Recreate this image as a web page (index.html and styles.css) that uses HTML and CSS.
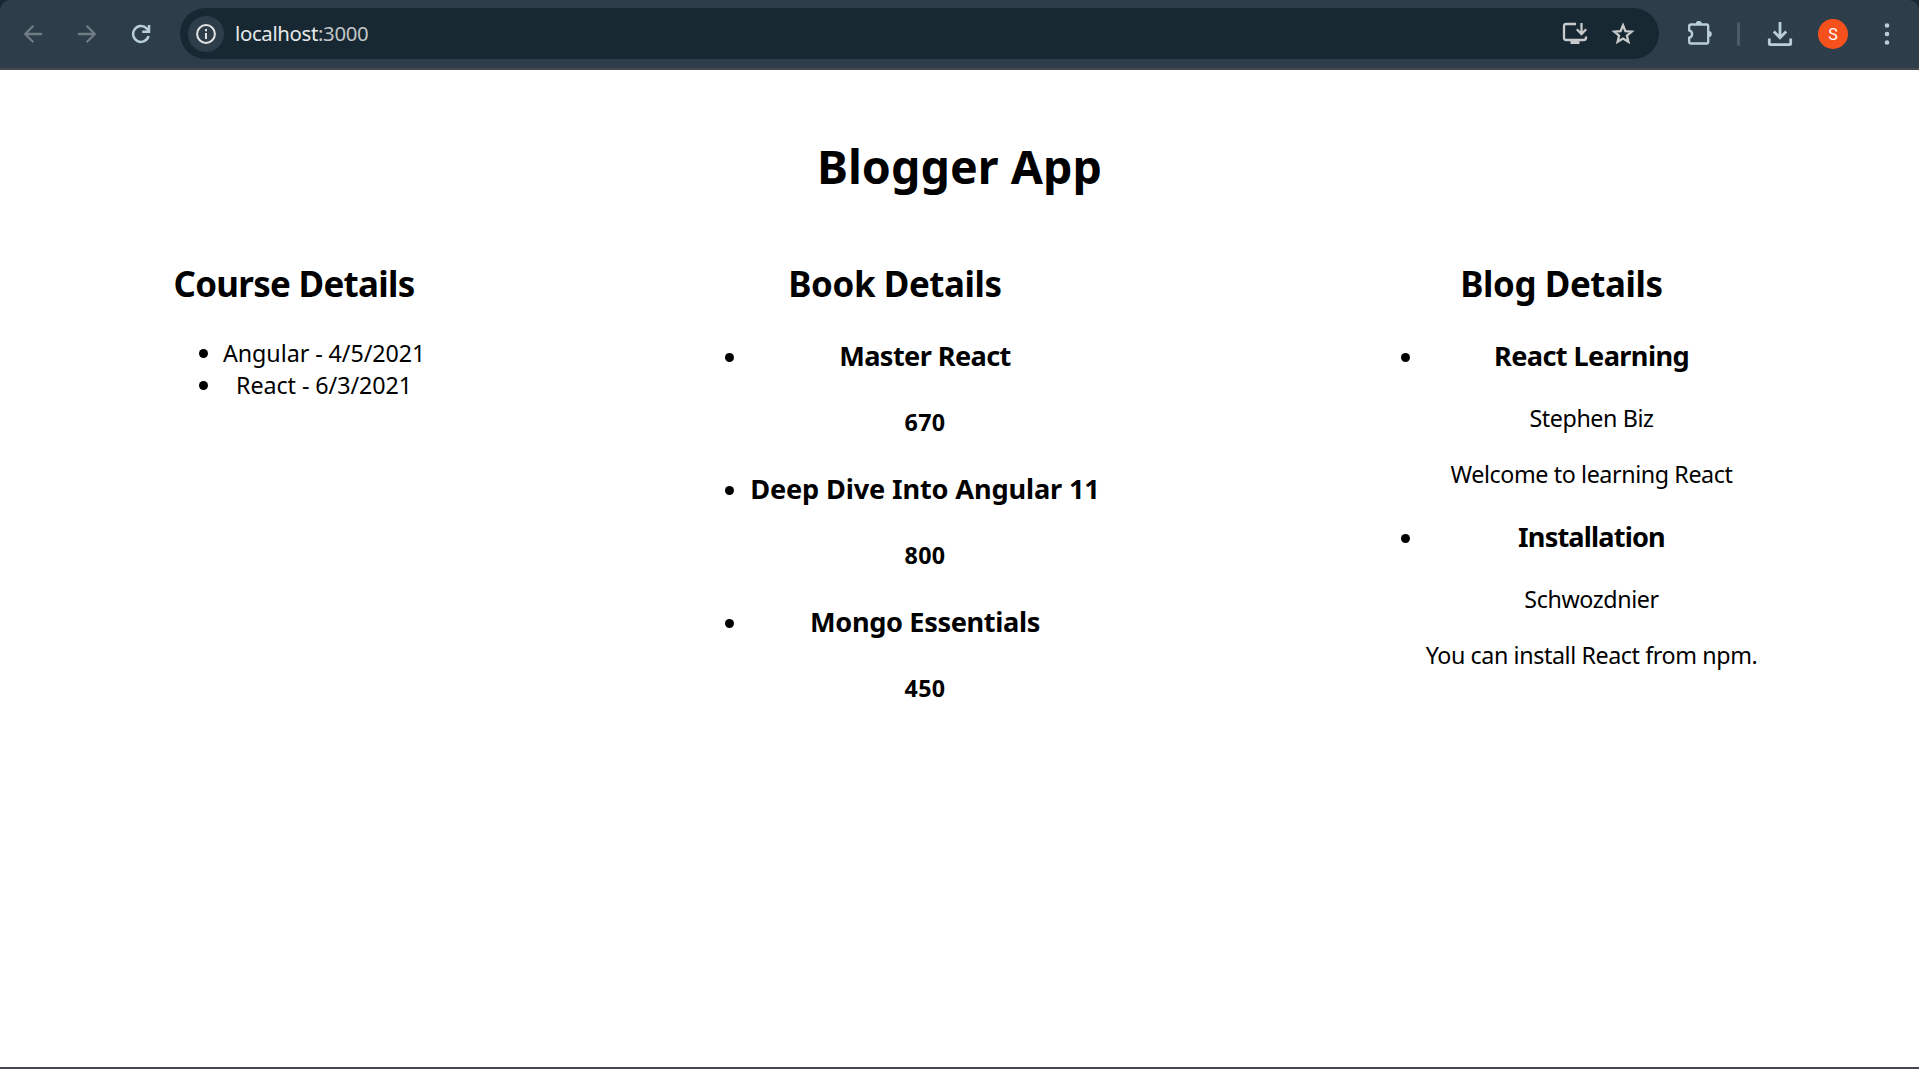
FILE: index.html
```
<!DOCTYPE html>
<html lang="en">
<head>
<meta charset="utf-8">
<title>Blogger App</title>
<link rel="stylesheet" href="styles.css">
</head>
<body>
<div class="window">
  <header class="frame">
    <nav class="toolbar">
      <svg class="icon back" width="20" height="20" viewBox="0 0 20 20"><path d="M19 10H2.6M10.4 1.8 2.2 10l8.2 8.2"/></svg>
      <svg class="icon forward" width="20" height="20" viewBox="0 0 20 20"><path d="M1 10h16.4M9.6 1.8l8.2 8.2-8.2 8.2"/></svg>
      <svg class="icon reload" width="20" height="20" viewBox="0 0 20 20"><path d="M17.6 12.2A7.9 7.9 0 1 1 15.8 4.6L17.4 6.3M18 1v6.8H11.2"/></svg>
      <div class="address">
        <span class="site-info"><svg class="icon info" width="20" height="20" viewBox="0 0 20 20"><circle cx="10" cy="10" r="8.9"/><path d="M10 9v6M10 5v2.2"/></svg></span>
        <span class="url">localhost<span class="port">:3000</span></span>
        <svg class="icon install" width="26" height="24" viewBox="0 0 26 24"><path d="M14 2H4.200Q2 2 2 4.200V15.800Q2 18 4.200 18H21.800Q24 18 24 15.800V14.500"/><path d="M19.500 1v10.500M14.800 7.300l4.700 4.700 4.700-4.700"/><path class="solid" d="M8.500 18h9v4h-9z"/></svg>
        <svg class="icon star" width="24" height="24" viewBox="0 0 24 24"><path d="M12 3.300l2.400 5.800 6.300.5-4.800 4.100 1.500 6.100-5.400-3.300-5.400 3.300 1.500-6.100-4.800-4.100 6.300-.5z"/></svg>
      </div>
      <svg class="icon extensions" width="26" height="26" viewBox="0 0 26 26"><path d="M4 3.500H19.500Q21.200 3.500 21.200 5.200V20.800Q21.200 22.500 19.500 22.500H4Q2.200 22.500 2.200 20.800V16.700A3.800 3.800 0 0 0 2.200 9.300V5.200Q2.200 3.500 4 3.500Z"/><path class="solid" d="M8.700 3a3.100 3.100 0 0 1 6.200 0zM21.700 9.900a3.100 3.100 0 0 1 0 6.200z"/></svg>
      <span class="divider"></span>
      <svg class="icon download" width="26" height="26" viewBox="0 0 26 26"><path d="M13 1v16M6.800 10.600l6.200 6.200 6.200-6.200M2.300 17.500v5.200q0 1 1 1h19.400q1 0 1-1v-5.200"/></svg>
      <span class="avatar">S</span>
      <svg class="icon more" width="6" height="24" viewBox="0 0 6 24"><circle cx="3" cy="3.500" r="2.300"/><circle cx="3" cy="12" r="2.300"/><circle cx="3" cy="20.500" r="2.300"/></svg>
    </nav>
  </header>
  <main class="page">
    <h1>Blogger App</h1>
    <div class="columns">
      <section class="courses">
        <h2>Course Details</h2>
        <ul>
          <li>Angular - 4/5/2021</li>
          <li>React - 6/3/2021</li>
        </ul>
      </section>
      <section class="books">
        <h2>Book Details</h2>
        <ul>
          <li><h3>Master React</h3><h4>670</h4></li>
          <li><h3 class="wide">Deep Dive Into Angular 11</h3><h4>800</h4></li>
          <li><h3 class="medium">Mongo Essentials</h3><h4>450</h4></li>
        </ul>
      </section>
      <section class="blogs">
        <h2>Blog Details</h2>
        <ul>
          <li><h3>React Learning</h3><p>Stephen Biz</p><p>Welcome to learning React</p></li>
          <li><h3 class="tight">Installation</h3><p>Schwozdnier</p><p>You can install React from npm.</p></li>
        </ul>
      </section>
    </div>
  </main>
</div>
</body>
</html>
```
FILE: styles.css
```
* { box-sizing: border-box; }
body {
  margin: 0;
  background: #fff;
  color: #000;
  font-family: "Noto Sans", sans-serif;
  font-size: 23.28px;
}
.window {
  display: flex;
  flex-direction: column;
  height: 1069px;
  overflow: hidden;
  border-bottom: 2px solid #47464e;
}

/* Browser toolbar */
.frame { background: #172832; }
.toolbar {
  display: flex;
  align-items: center;
  height: 70px;
  padding: 0 29px 0 23px;
  background: #2d3e4a;
  border-bottom: 2px solid #46484e;
  border-radius: 10px 10px 0 0;
}
.icon {
  flex: none;
  fill: none;
  stroke: #b9cedb;
  stroke-width: 2.3;
}
.icon .solid { fill: #b9cedb; stroke: none; }
.back, .forward { stroke: #717c84; }
.forward { margin-left: 34px; }
.reload { margin-left: 34px; stroke-width: 2.5; }
.address {
  display: flex;
  align-items: center;
  width: 1480px;
  height: 51px;
  margin: 0 0 1px 29px;
  padding: 0 24px 0 8px;
  border-radius: 26px;
  background: #172832;
}
.address .icon { stroke: #c7c9cb; }
.address .icon .solid { fill: #c7c9cb; }
.site-info {
  display: flex;
  align-items: center;
  justify-content: center;
  width: 36px;
  height: 36px;
  border-radius: 50%;
  background: #2d3e4a;
}
.site-info .info { stroke: #e3e3e3; stroke-width: 2; }
.url {
  flex: 1;
  margin-left: 11px;
  padding-bottom: 2px;
  color: #e6e8ea;
  font-size: 20.37px;
  line-height: 28px;
  letter-spacing: -.34px;
}
.port { color: #c3c6c8; }
.star { margin-left: 23px; }
.extensions { margin-left: 28px; }
.divider {
  width: 3px;
  height: 24px;
  margin-left: 24px;
  border-radius: 2px;
  background: #4a5c69;
}
.download { margin-left: 27px; stroke-width: 2.8; }
.avatar {
  width: 30px;
  height: 30px;
  margin-left: 25px;
  border-radius: 50%;
  background: #f6511d;
  color: #fff;
  font: 16px/31px Roboto, sans-serif;
  text-align: center;
}
.more { margin-left: 36px; fill: #b9cedb; stroke: none; }
.more circle { fill: #b9cedb; }

/* Page content */
.page { flex: 1; padding-top: 62px; text-align: center; }
h1, h2, h3, h4 { font-weight: 700; }
h1 {
  margin: 0 0 62px;
  padding-top: 4px;
  font-size: 46.56px;
  line-height: 60px;
  letter-spacing: .06px;
}
h2 {
  margin: 0 0 30px;
  padding-top: 3px;
  font-size: 34.92px;
  line-height: 45px;
  letter-spacing: -.42px;
}
h3 {
  margin: 28px 0;
  padding-top: 2px;
  font-size: 27.16px;
  line-height: 35px;
  letter-spacing: -.6px;
}
h4 {
  margin: 32px 0 30px;
  padding-top: 2px;
  font-size: 23.28px;
  line-height: 30px;
  letter-spacing: .34px;
}
p {
  margin: 24px 0;
  padding-top: 2px;
  line-height: 30px;
  letter-spacing: -.4px;
}
ul { margin: 0; padding: 0 0 0 60px; }
li::marker { font-size: 24px; }
.columns {
  display: flex;
  justify-content: space-between;
  padding: 0 161px 0 163px;
}
.courses { width: 262px; }
.courses h2 { letter-spacing: -.69px; }
.courses ul { padding-top: 1px; }
.courses li { height: 32px; line-height: 32px; letter-spacing: -.06px; white-space: nowrap; }
.books { width: 412px; }
.books h3 { margin-top: 32px; }
.blogs { width: 393px; }
.blogs li:first-child h3, .books li:first-child h3 { margin-top: 0; }
h3.wide { letter-spacing: -.15px; white-space: nowrap; }
h3.medium { letter-spacing: -.36px; }
h3.tight { letter-spacing: -.84px; }
```
